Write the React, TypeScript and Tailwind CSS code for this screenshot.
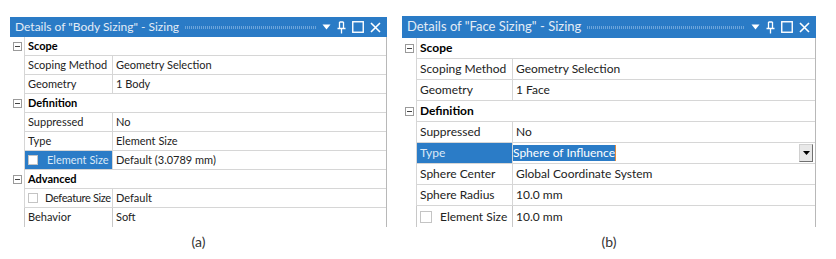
import React from "react";

type Row =
  | { kind: "header"; text: string }
  | { kind: "prop"; label: string; value: string; check?: boolean; selected?: boolean; combo?: boolean; tight?: boolean };

const rowsA: Row[] = [
  { kind: "header", text: "Scope" },
  { kind: "prop", label: "Scoping Method", value: "Geometry Selection" },
  { kind: "prop", label: "Geometry", value: "1 Body" },
  { kind: "header", text: "Definition" },
  { kind: "prop", label: "Suppressed", value: "No" },
  { kind: "prop", label: "Type", value: "Element Size" },
  { kind: "prop", label: "Element Size", value: "Default (3.0789 mm)", check: true, selected: true },
  { kind: "header", text: "Advanced" },
  { kind: "prop", label: "Defeature Size", value: "Default", check: true, tight: true },
  { kind: "prop", label: "Behavior", value: "Soft" },
];

const rowsB: Row[] = [
  { kind: "header", text: "Scope" },
  { kind: "prop", label: "Scoping Method", value: "Geometry Selection" },
  { kind: "prop", label: "Geometry", value: "1 Face" },
  { kind: "header", text: "Definition" },
  { kind: "prop", label: "Suppressed", value: "No" },
  { kind: "prop", label: "Type", value: "Sphere of Influence", selected: true, combo: true },
  { kind: "prop", label: "Sphere Center", value: "Global Coordinate System" },
  { kind: "prop", label: "Sphere Radius", value: "10.0 mm" },
  { kind: "prop", label: "Element Size", value: "10.0 mm", check: true },
];

const font = { fontFamily: 'Lato, "Open Sans", "Liberation Sans", sans-serif' };

function TitleIcons() {
  return (
    <div className="flex items-center gap-[6px] pr-[6px] text-white">
      <svg width="9" height="6" viewBox="0 0 9 6">
        <path d="M0.5 0.5 L8.5 0.5 L4.5 5.5 Z" fill="#ffffff" />
      </svg>
      <svg width="9" height="13" viewBox="0 0 9 13">
        <path d="M2.5 1 V7 M6.5 1 V7 M2.5 1 H6.5 M0.5 7.5 H8.5 M4.5 7.5 V12.5" stroke="#ffffff" strokeWidth="1.3" fill="none" />
      </svg>
      <svg width="12" height="12" viewBox="0 0 12 12">
        <rect x="0.75" y="0.75" width="10.5" height="10.5" stroke="#ffffff" strokeWidth="1.4" fill="none" />
      </svg>
      <svg width="11" height="11" viewBox="0 0 11 11">
        <path d="M1 1 L10 10 M10 1 L1 10" stroke="#ffffff" strokeWidth="1.6" />
      </svg>
    </div>
  );
}

function Panel({ title, rows, big }: { title: string; rows: Row[]; big?: boolean }) {
  const rowH = big ? "h-[21px]" : "h-[19px]";
  const labelW = big ? "w-[97px]" : "w-[89px]";
  const text = big ? "text-[12px]" : "text-[11px]";
  const box = big ? "w-[12px] h-[12px]" : "w-[10px] h-[10px]";
  return (
    <div className={big ? "w-[414px]" : "w-[377px]"} style={font}>
      <div className={`flex items-center bg-[#2a7bc6] ${big ? "h-[22px]" : "h-[20px]"}`}>
        <span className={`pl-[5px] text-[#e3ecf6] whitespace-nowrap ${big ? "text-[13px]" : "text-[12px]"}`}>{title}</span>
        <div className="flex-1 mx-[6px] h-[3px] bg-[repeating-linear-gradient(90deg,#6ea6db_0,#6ea6db_1px,transparent_1px,transparent_2px)]" />
        <TitleIcons />
      </div>
      <div className="border-r border-[#b8b8b8]">
        {rows.map((r, i) => {
          const last = i === rows.length - 1;
          const bottom = last ? "" : "border-b border-[#d6d6d6]";
          if (r.kind === "header") {
            return (
              <div key={i} className={`flex ${rowH}`}>
                <div className="w-[14px] flex items-center justify-center">
                  <div className="w-[9px] h-[9px] border border-[#9a9a9a] flex items-center justify-center bg-white">
                    <div className="w-[5px] h-[1px] bg-[#444]" />
                  </div>
                </div>
                <div className={`flex-1 flex items-center pl-[3px] border-l border-[#b8b8b8] font-bold text-black ${text} ${bottom}`}>
                  {r.text}
                </div>
              </div>
            );
          }
          return (
            <div key={i} className={`flex ${rowH}`}>
              <div className="w-[14px]" />
              <div
                className={`${labelW} shrink-0 flex items-center pl-[3px] border-l border-r border-[#c8c8c8] whitespace-nowrap overflow-hidden ${text} ${bottom} ${
                  r.tight ? "tracking-[-0.35px]" : ""
                } ${r.selected ? "bg-[#2b7cc7] text-[#dbe9f7]" : "text-[#222]"}`}
              >
                {r.check && (
                  <div
                    className={`${box} shrink-0 bg-white border border-[#c4c4c4] ${big ? "mr-[8px]" : r.tight ? "mr-[7px]" : "mr-[9px]"}`}
                  />
                )}
                {r.label}
              </div>
              <div className={`flex-1 flex items-center ${text} ${bottom} ${r.combo ? "" : "pl-[3px]"} text-[#222] whitespace-nowrap`}>
                {r.combo ? (
                  <>
                    <span className="bg-[#2b7cc7] text-white h-[16px] flex items-center leading-none border-r border-[#e38a3c]">{r.value}</span>
                    <div className="flex-1" />
                    <div className="w-[14px] h-[18px] mr-[2px] bg-[#e8e8e8] border border-[#d0d0d0] border-r-[#707070] border-b-[#707070] flex items-center justify-center">
                      <svg width="7" height="4" viewBox="0 0 7 4">
                        <path d="M0 0 H7 L3.5 4 Z" fill="#000" />
                      </svg>
                    </div>
                  </>
                ) : (
                  r.value
                )}
              </div>
            </div>
          );
        })}
      </div>
    </div>
  );
}

export default function App() {
  return (
    <div className="w-[836px] h-[259px] bg-white relative flex">
      <div className="flex flex-col pl-[10px] pt-[17px]">
        <Panel title={'Details of "Body Sizing" - Sizing'} rows={rowsA} />
        <div className="text-center text-[14px] text-[#333] mt-[4px]" style={font}>(a)</div>
      </div>
      <div className="flex flex-col pl-[15px] pt-[16px]">
        <Panel title={'Details of "Face Sizing" - Sizing'} rows={rowsB} big />
        <div className="text-center text-[14px] text-[#333] mt-[4px]" style={font}>(b)</div>
      </div>
    </div>
  );
}
